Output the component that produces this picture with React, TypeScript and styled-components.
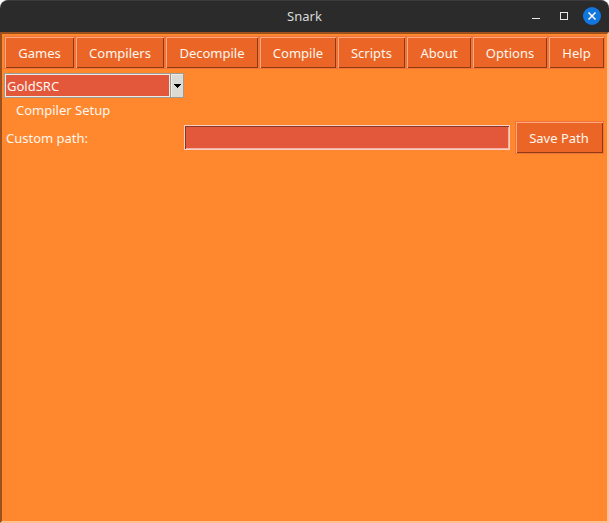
import React from "react";
import styled, { createGlobalStyle } from "styled-components";

const GlobalStyle = createGlobalStyle`
  * { box-sizing: border-box; }
  body {
    margin: 0;
    background: #fff;
    font-family: "Noto Sans", sans-serif;
    font-size: 13px;
    line-height: 18px;
    color: #fff6ef;
  }
`;

const Window = styled.div`
  width: 609px;
  height: 523px;
  display: flex;
  flex-direction: column;
  overflow: hidden;
`;

const TitleBar = styled.header`
  height: 32px;
  flex: none;
  display: grid;
  grid-template-columns: 1fr auto 1fr;
  align-items: center;
  background: #2b2b2b;
  border-top: 1px solid #3c3c3c;
  border-radius: 8px 8px 0 0;
`;

const Title = styled.h1`
  grid-column: 2;
  margin: 0;
  padding-bottom: 2px;
  font-size: 13px;
  font-weight: 400;
  color: #dadada;
`;

const WindowControls = styled.div`
  justify-self: end;
  height: 31px;
  display: flex;
`;

const Frame = styled.main`
  flex: 1;
  border: 2px solid;
  border-color: #9b501d #ffc091 #ffc091 #9b501d;
  background: #ff882e;
  padding: 2px;
`;

const Toolbar = styled.nav`
  display: flex;
`;

const Button = styled.button<{ $width: number }>`
  width: ${(p) => p.$width}px;
  height: 33px;
  flex: none;
  padding: 0;
  border: 1px solid #f07437;
  background: #eb6626;
  box-shadow: inset 1px 1px #ffa880, inset -1px -1px #8f3a12;
  color: inherit;
  font: inherit;
  white-space: nowrap;
`;

const SaveButton = styled(Button)`
  padding-right: 1px;
`;

const Combo = styled.div`
  width: 180px;
  height: 25px;
  margin-top: 4px;
  display: flex;
  border: 1px solid #9e9a91;
`;

const ComboValue = styled.div`
  flex: 1;
  padding: 2px;
  border: 1px solid #eeebe7;
  border-left-width: 0;
  box-shadow: inset 1px 0 #eeebe7;
  background: #e3573b;
`;

const ComboArrow = styled.div`
  width: 13px;
  display: flex;
  align-items: center;
  justify-content: center;
  padding-top: 1px;
  border-left: 1px solid #9e9a91;
  background: #dcdad5;
  box-shadow: inset 1px 1px #eeebe7;
`;

const SectionTitle = styled.div`
  height: 23px;
  padding: 3px 0 0 12px;
`;

const PathRow = styled.div`
  display: flex;
  align-items: center;
`;

const PathLabel = styled.label`
  width: 180px;
  padding-left: 2px;
`;

const PathInput = styled.input`
  width: 326px;
  height: 25px;
  margin-right: 5px;
  padding: 0 2px;
  border: 1px solid #f8cfc0;
  border-radius: 0;
  background: #e3573b;
  box-shadow: inset 1px 1px #87382a, inset -1px -1px #f8b1a4;
  color: inherit;
  font: inherit;
`;

const menu = [
  { label: "Games", width: 71 },
  { label: "Compilers", width: 90 },
  { label: "Decompile", width: 94 },
  { label: "Compile", width: 78 },
  { label: "Scripts", width: 69 },
  { label: "About", width: 66 },
  { label: "Options", width: 76 },
  { label: "Help", width: 57 },
];

export default function App() {
  return (
    <Window>
      <GlobalStyle />
      <TitleBar>
        <Title>Snark</Title>
        <WindowControls>
          <svg width="84" height="31" viewBox="0 0 84 31" fill="none">
            <path d="M7 17.5h8" stroke="#e8e8e4" />
            <rect x="35.5" y="11.5" width="7" height="7" stroke="#e8e8e4" />
            <circle cx="67" cy="15" r="9" fill="#1177df" />
            <path d="M63.5 11.5l7 7M70.5 11.5l-7 7" stroke="#fff" strokeWidth="1.5" />
          </svg>
        </WindowControls>
      </TitleBar>
      <Frame>
        <Toolbar>
          {menu.map((item) => (
            <Button key={item.label} $width={item.width}>{item.label}</Button>
          ))}
        </Toolbar>
        <Combo>
          <ComboValue>GoldSRC</ComboValue>
          <ComboArrow>
            <svg width="7" height="4" viewBox="0 0 7 4" shapeRendering="crispEdges">
              <path d="M0 0h7v1h-1v1h-1v1h-1v1h-1v-1h-1v-1h-1v-1h-1z" fill="#000" />
            </svg>
          </ComboArrow>
        </Combo>
        <SectionTitle>Compiler Setup</SectionTitle>
        <PathRow>
          <PathLabel htmlFor="path">Custom path:</PathLabel>
          <PathInput id="path" />
          <SaveButton $width={89}>Save Path</SaveButton>
        </PathRow>
      </Frame>
    </Window>
  );
}
